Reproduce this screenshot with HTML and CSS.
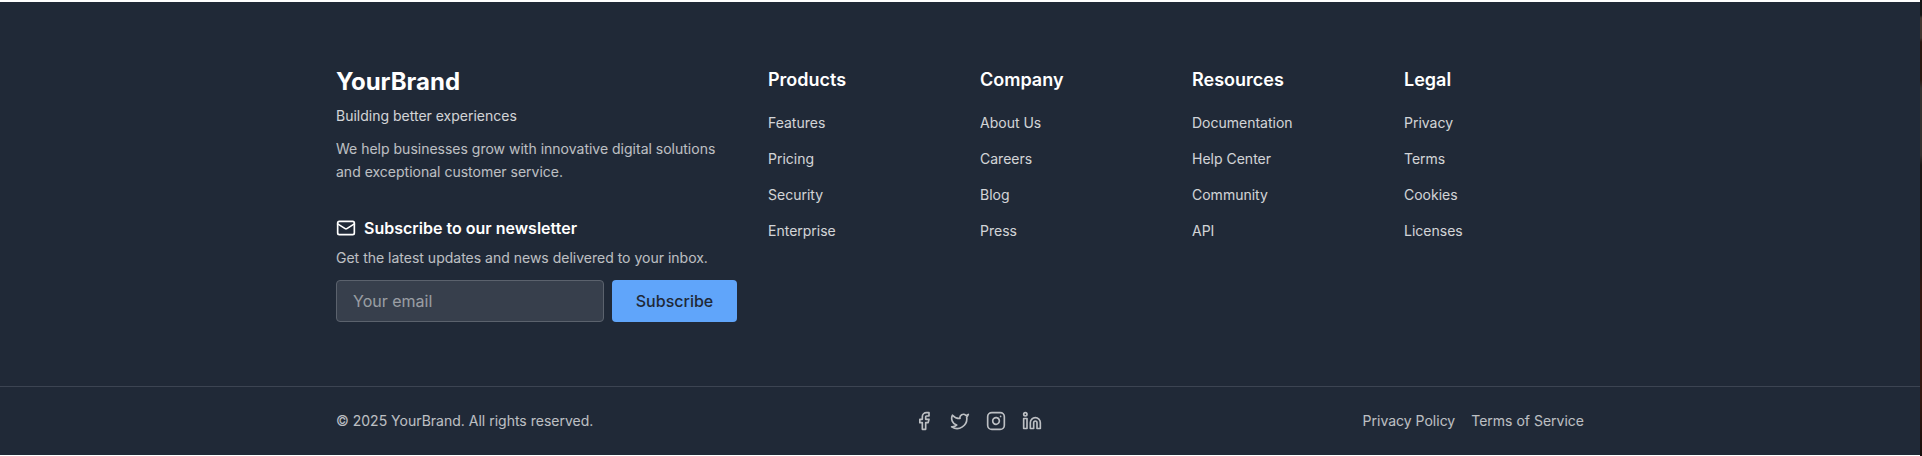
FILE: index.html
```html
<!DOCTYPE html>
<html lang="en">
<head>
<meta charset="utf-8">
<title>YourBrand</title>
<link rel="stylesheet" href="styles.css">
</head>
<body>
<div class="page">
<footer class="footer">
  <div class="main">
    <section class="about">
      <h2 class="brand">YourBrand</h2>
      <p class="tagline">Building better experiences</p>
      <p class="description">We help businesses grow with innovative digital solutions and exceptional customer service.</p>
      <h3 class="news-title">
        <svg class="icon" viewBox="0 0 24 24"><rect x="2" y="4" width="20" height="16" rx="2"/><path d="m22 7-8.97 5.7a1.94 1.94 0 0 1-2.06 0L2 7"/></svg>
        Subscribe to our newsletter
      </h3>
      <p class="news-text">Get the latest updates and news delivered to your inbox.</p>
      <form class="form">
        <input class="email" type="email" placeholder="Your email">
        <button class="button" type="button">Subscribe</button>
      </form>
    </section>
    <nav class="column">
      <h3 class="column-title">Products</h3>
      <a class="link">Features</a><a class="link">Pricing</a><a class="link">Security</a><a class="link">Enterprise</a>
    </nav>
    <nav class="column">
      <h3 class="column-title">Company</h3>
      <a class="link">About Us</a><a class="link">Careers</a><a class="link">Blog</a><a class="link">Press</a>
    </nav>
    <nav class="column">
      <h3 class="column-title">Resources</h3>
      <a class="link">Documentation</a><a class="link">Help Center</a><a class="link">Community</a><a class="link">API</a>
    </nav>
    <nav class="column">
      <h3 class="column-title">Legal</h3>
      <a class="link">Privacy</a><a class="link">Terms</a><a class="link">Cookies</a><a class="link">Licenses</a>
    </nav>
  </div>
  <div class="bottom">
    <div class="bottom-inner">
      <p class="muted">© 2025 YourBrand. All rights reserved.</p>
      <div class="social">
        <svg class="icon" viewBox="0 0 24 24"><path d="M18 2h-3a5 5 0 0 0-5 5v3H7v4h3v8h4v-8h3l1-4h-4V7a1 1 0 0 1 1-1h3z"/></svg>
        <svg class="icon" viewBox="0 0 24 24"><path d="M22 4s-.7 2.1-2 3.4c1.6 10-9.4 17.3-18 11.6 2.2.1 4.4-.6 6-2C3 15.5.5 9.6 3 5c2.2 2.6 5.6 4.1 9 4-.9-4.2 4-6.6 7-3.8 1.1 0 3-1.2 3-1.2z"/></svg>
        <svg class="icon" viewBox="0 0 24 24"><rect x="2" y="2" width="20" height="20" rx="5"/><path d="M16 11.37A4 4 0 1 1 12.63 8 4 4 0 0 1 16 11.37z"/><path d="M17.5 6.5h.01"/></svg>
        <svg class="icon" viewBox="0 0 24 24"><path d="M16 8a6 6 0 0 1 6 6v7h-4v-7a2 2 0 0 0-4 0v7h-4v-7a6 6 0 0 1 6-6z"/><rect x="2" y="9" width="4" height="12"/><circle cx="4" cy="4" r="2"/></svg>
      </div>
      <div class="policies"><a class="muted">Privacy Policy</a><a class="muted">Terms of Service</a></div>
    </div>
  </div>
</footer>
<div class="edge"></div>
</div>
</body>
</html>
```
FILE: styles.css
```css
* { box-sizing: border-box; margin: 0; }
body { background: #fff; color: #fff; font: 14px/20px Inter, sans-serif; overflow: hidden; }
.page { display: flex; height: 456px; }
.edge { width: 2px; background: linear-gradient(#151515 0 15px, #40352f 18px 38px, #28160f 42px 80px, #33302f 88px 155px, #1b1715 165px 260px, #32170f 290px 400px, #160e0c); }
.footer { width: 1920px; height: 453px; margin-top: 2px; background: #202937; }
.main { display: grid; grid-template-columns: 400px repeat(4, 180px); gap: 32px; width: 1248px; height: 384px; margin: 0 auto; padding-top: 64px; }
.brand { font-size: 24px; line-height: 32px; font-weight: 700; margin-bottom: 8px; }
.tagline { opacity: .8; margin-bottom: 11px; }
.description { opacity: .7; line-height: 23px; margin-bottom: 33px; }
.news-title { display: flex; align-items: center; gap: 8px; font-size: 16px; line-height: 24px; font-weight: 600; margin-bottom: 8px; }
.news-text { opacity: .7; margin-bottom: 12px; }
.icon { width: 20px; height: 20px; fill: none; stroke: currentColor; stroke-width: 2; stroke-linecap: round; stroke-linejoin: round; }
.form { display: flex; gap: 8px; width: 401px; }
.email { flex: 1; min-width: 0; height: 42px; padding: 0 16px; font: 16px Inter, sans-serif; color: #fff; background: #373f4c; border: 1px solid #5b626d; border-radius: 4px; }
.email::placeholder { color: rgba(255,255,255,.5); }
.button { width: 125px; height: 42px; border: 0; border-radius: 4px; background: #60a5fa; color: #1f2937; font: 500 16px Inter, sans-serif; }
.column { display: flex; flex-direction: column; align-items: flex-start; gap: 16px; }
.column-title { font-size: 18px; line-height: 28px; font-weight: 600; margin-bottom: 3px; }
.link { opacity: .8; }
.bottom { border-top: 1px solid #3c4452; }
.bottom-inner { display: flex; justify-content: space-between; align-items: center; width: 1248px; height: 68px; margin: 0 auto; }
.muted { opacity: .7; }
.social { display: flex; gap: 16px; opacity: .7; }
.policies { display: flex; gap: 16px; }
```
